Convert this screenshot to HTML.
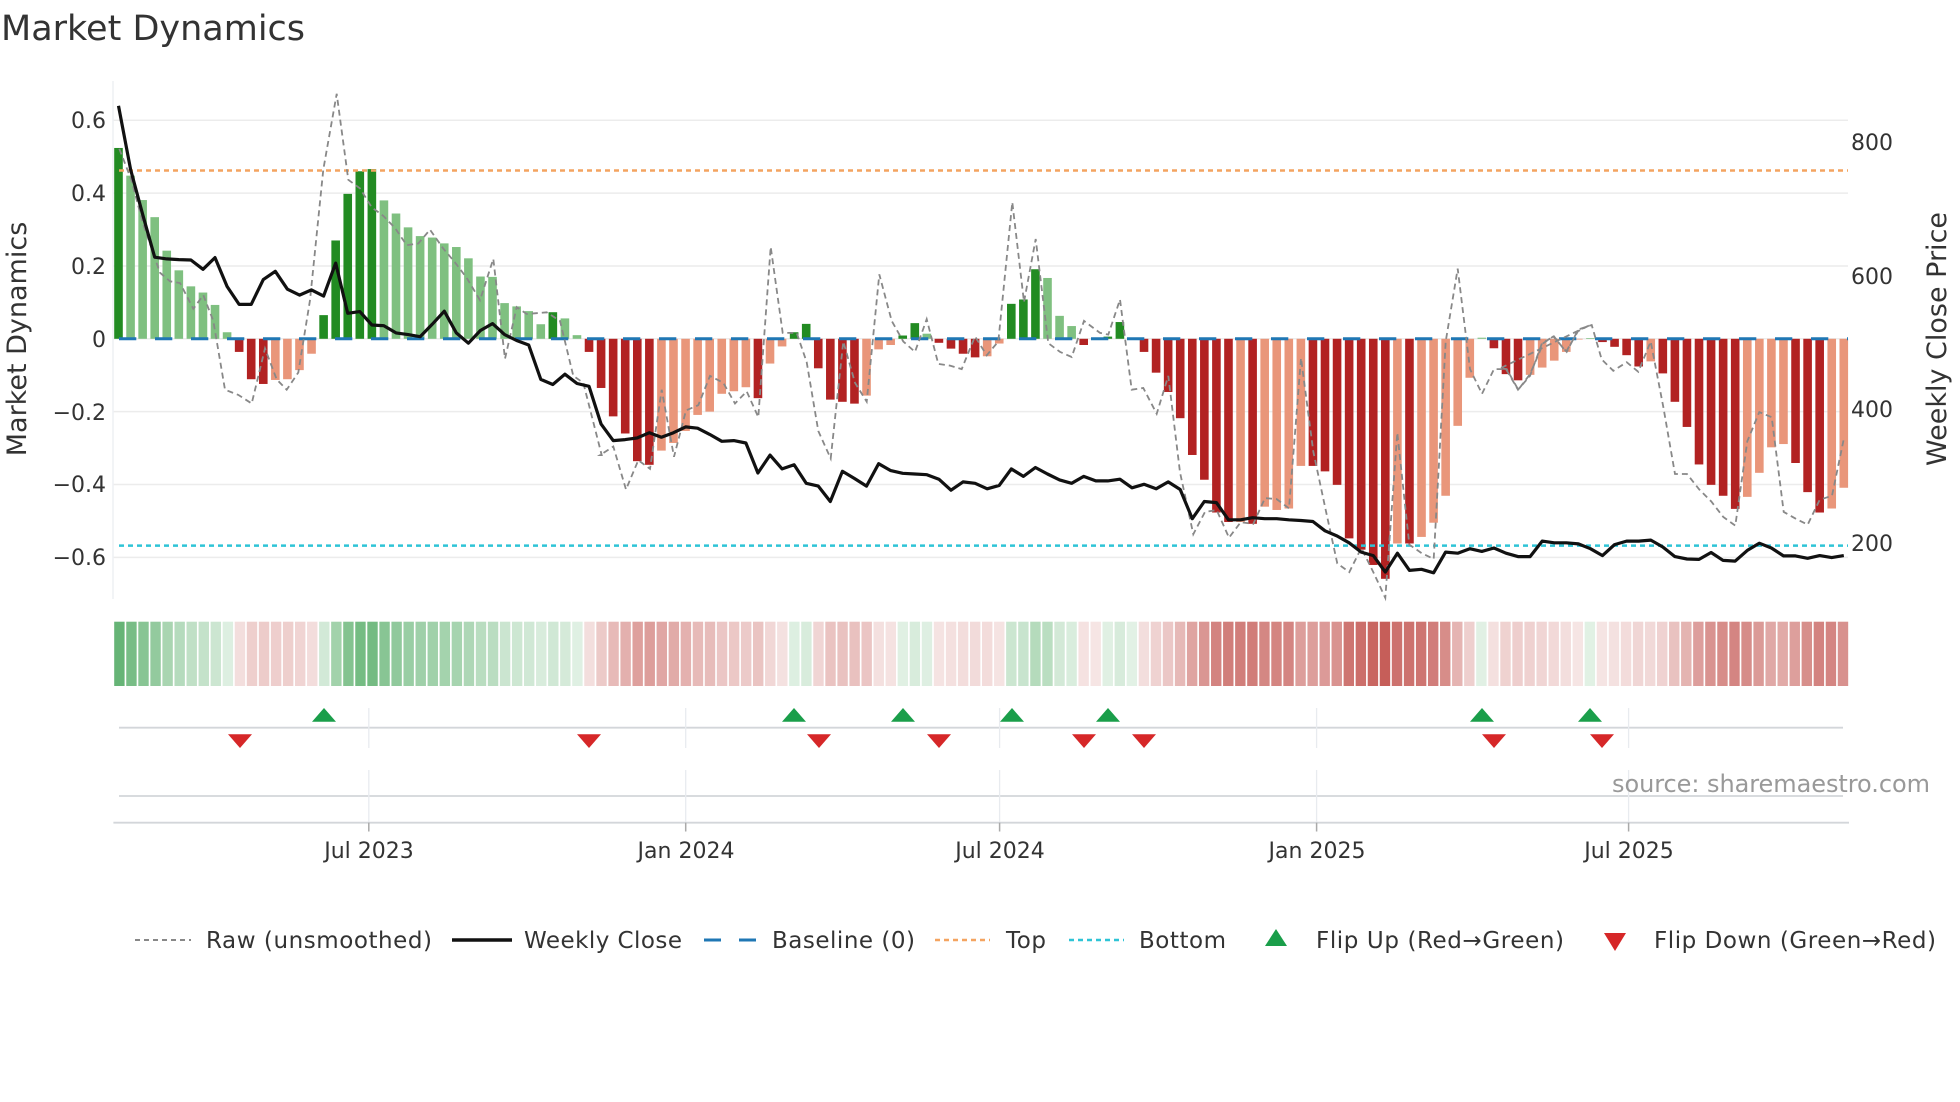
<!DOCTYPE html>
<html><head><meta charset="utf-8"><style>
html,body{margin:0;padding:0;background:#fff;}
svg{display:block;font-family:"DejaVu Sans","Liberation Sans",sans-serif;}
</style></head><body>
<svg id="c" width="1960" height="1102" viewBox="0 0 1960 1102" xmlns="http://www.w3.org/2000/svg">
<rect width="1960" height="1102" fill="#fff"/>
<text x="1" y="40" font-size="35" fill="#333">Market Dynamics</text>
<g id="grid"></g>
<g id="bars"></g>
<g id="lines"></g>
<g id="strip"></g>
<g id="low"></g>
<g font-size="22" fill="#333" text-anchor="end">
<text x="106" y="128">0.6</text>
<text x="106" y="201">0.4</text>
<text x="106" y="274">0.2</text>
<text x="106" y="347">0</text>
<text x="106" y="420">−0.2</text>
<text x="106" y="492">−0.4</text>
<text x="106" y="565">−0.6</text>
</g>
<g font-size="22" fill="#333">
<text x="1851" y="150">800</text>
<text x="1851" y="284">600</text>
<text x="1851" y="417">400</text>
<text x="1851" y="551">200</text>
</g>
<text transform="translate(26,339) rotate(-90)" font-size="27" fill="#333" text-anchor="middle">Market Dynamics</text>
<text transform="translate(1946,339) rotate(-90)" font-size="27" fill="#333" text-anchor="middle">Weekly Close Price</text>
<g font-size="22" fill="#333" text-anchor="middle">
<text x="369" y="858">Jul 2023</text>
<text x="686" y="858">Jan 2024</text>
<text x="1000" y="858">Jul 2024</text>
<text x="1317" y="858">Jan 2025</text>
<text x="1629" y="858">Jul 2025</text>
</g>
<text x="1612" y="792" font-size="24" fill="#999" textLength="318">source: sharemaestro.com</text>
<g font-size="23" fill="#333">
<line x1="135" y1="940" x2="191" y2="940" stroke="#888" stroke-width="2" stroke-dasharray="5,4"/>
<text x="206" y="948" textLength="226">Raw (unsmoothed)</text>
<line x1="452" y1="940" x2="512" y2="940" stroke="#111" stroke-width="3.5"/>
<text x="524" y="948" textLength="158">Weekly Close</text>
<line x1="704" y1="940" x2="756" y2="940" stroke="#1f77b4" stroke-width="3" stroke-dasharray="17,18"/>
<text x="772" y="948" textLength="143">Baseline (0)</text>
<line x1="935" y1="940" x2="990" y2="940" stroke="#f4a460" stroke-width="2.5" stroke-dasharray="5,4"/>
<text x="1006" y="948" textLength="40">Top</text>
<line x1="1069" y1="940" x2="1124" y2="940" stroke="#2ec4d6" stroke-width="2.5" stroke-dasharray="5,4"/>
<text x="1139" y="948" textLength="87">Bottom</text>
<polygon points="1265,946 1287,946 1276,929" fill="#1a9e4a"/>
<text x="1316" y="948" textLength="248">Flip Up (Red→Green)</text>
<polygon points="1604,933 1626,933 1615,951" fill="#d62728"/>
<text x="1654" y="948" textLength="282">Flip Down (Green→Red)</text>
</g>
</svg>
<script>
var NS="http://www.w3.org/2000/svg";
function el(p,t,a){var e=document.createElementNS(NS,t);for(var k in a)e.setAttribute(k,a[k]);document.getElementById(p).appendChild(e);return e;}
var S=118.5,P=12.065,B=338.8,K=364.2;
function X(i){return S+P*i;}
// grid
[0.6,0.4,0.2,0,-0.2,-0.4,-0.6].forEach(function(v){el("grid","line",{x1:113,x2:1848,y1:B-v*K,y2:B-v*K,stroke:"#ececec","stroke-width":1.5});});
el("grid","line",{x1:113,x2:113,y1:81,y2:599,stroke:"#eef0f3","stroke-width":1.5});
var V=[.524,.448,.381,.334,.242,.188,.144,.127,.093,.018,-.036,-.111,-.124,-.113,-.111,-.086,-.041,.065,.27,.398,.46,.466,.38,.344,.306,.282,.278,.262,.252,.221,.171,.17,.098,.089,.076,.04,.073,.056,.01,-.036,-.135,-.213,-.26,-.336,-.346,-.307,-.286,-.253,-.209,-.2,-.151,-.144,-.133,-.163,-.068,-.021,.018,.041,-.081,-.167,-.173,-.178,-.156,-.029,-.017,.009,.043,.014,-.011,-.027,-.041,-.051,-.048,-.013,.096,.108,.191,.167,.063,.035,-.017,-.003,.006,.046,.001,-.036,-.093,-.146,-.218,-.319,-.387,-.477,-.503,-.503,-.508,-.461,-.47,-.466,-.349,-.349,-.364,-.401,-.548,-.579,-.621,-.659,-.562,-.562,-.544,-.505,-.431,-.239,-.107,.003,-.026,-.097,-.114,-.099,-.079,-.06,-.036,-.002,.002,-.009,-.022,-.045,-.076,-.062,-.095,-.173,-.242,-.345,-.401,-.431,-.467,-.434,-.368,-.298,-.289,-.341,-.421,-.477,-.466,-.409];
var C="Gggggggggg"+"RRRrrrr"+"GGGGG"+"gggggggggggggg"+"Ggg"+"RR"+"RRRR"+"rrrrrrrr"+"R"+"rr"+"GG"+"RRRR"+"rrr"+"GGg"+"RRRR"+"rr"+"GGG"+"ggg"+"Rr"+"GGg"+"RRRRRRRR"+"r"+"R"+"rrrr"+"RRRRRRR"+"r"+"R"+"rrrrr"+"g"+"RRR"+"rrrrr"+"g"+"RRRR"+"r"+"RRRRRRR"+"rrrr"+"RRR"+"rr";
var COL={G:"#228b22",g:"#7fc080",R:"#b22222",r:"#e9967a"};
var last=1;
for(var i=0;i<144;i++){
 var v=V[i],y=B-v*K,c=COL[C[i]]||"#e9967a";
 el("bars","rect",{x:X(i)-4.3,width:8.6,y:Math.min(y,B),height:Math.abs(y-B),fill:c});
 // strip
 var s=v>0?1:(v<0?-1:last);last=s;
 var a=0.15+0.8*Math.min(Math.abs(v)/0.66,1);
 var base=s>0?[60,160,80]:[195,85,80];
 var rgb=base.map(function(b){return Math.round(255-(255-b)*a);});
 el("strip","rect",{x:113.4+12.053*i+0.8,width:10.4,y:621.7,height:64.3,fill:"rgb("+rgb.join(",")+")"});
}
// reference lines
el("lines","line",{x1:119,x2:1848,y1:170.5,y2:170.5,stroke:"#f4a460","stroke-width":2.5,"stroke-dasharray":"5,4"});
el("lines","line",{x1:119,x2:1848,y1:545.6,y2:545.6,stroke:"#2ec4d6","stroke-width":2.5,"stroke-dasharray":"5,4"});
el("lines","line",{x1:110,x2:1848,y1:B,y2:B,stroke:"#1f77b4","stroke-width":3,"stroke-dasharray":"17.3,18.7","stroke-dashoffset":"-9"});
// raw
var R2=[[28,200],[64,290],[100,420],[150,560],[180,585],[210,590],[250,665],[280,625],[310,700],[345,900],[385,915],[425,940],[465,780],[500,870],[530,900],[565,850],[600,640],[640,260],[680,40],[715,290],[750,315],[785,370],[820,395],[855,430],[890,480],[925,475],[960,435],[1000,490],[1035,530],[1070,575],[1110,640],[1150,520],[1185,810],[1220,660],[1250,680],[1310,675],[1350,700],[1390,860],[1420,880],[1475,1090]];
var R3=[[0,1090],[40,1065],[78,1190],[115,1105],[150,1130],[185,900],[222,1095],[258,960],[295,945],[330,860],[370,880],[405,940],[440,905],[475,980],[512,485],[548,735],[590,735],[620,820],[655,1020],[692,1100],[730,760],[765,880],[800,935],[838,565],[875,700],[910,760],[945,790],[980,695],[1015,825],[1050,830],[1085,840],[1125,745],[1160,800],[1195,760],[1237,355],[1272,645],[1307,462],[1345,765],[1380,790],[1415,805],[1452,700]];
var R4=[[0,735],[25,740],[60,638],[95,900],[130,895],[170,970],[205,860],[240,1140],[280,1320],[315,1255],[350,1250],[387,1330],[422,1285],[460,1290],[495,1215],[530,1218],[567,1245],[603,808],[640,1080],[675,1240],[712,1405],[748,1430],[784,1360],[820,1430],[856,1505],[892,1025],[928,1350],[965,1375],[1001,1392],[1037,760],[1073,548],[1110,840],[1146,912],[1182,840],[1218,840],[1254,900],[1290,860],[1326,765],[1362,745],[1398,790],[1434,730],[1470,712]];
var R5=[[0,838],[20,840],[55,900],[90,855],[130,765],[160,745],[200,790],[235,725],[275,712],[305,812],[340,845],[380,820],[415,848],[452,760],[490,950],[525,1145],[561,1145],[598,1190],[634,1225],[670,1270],[706,1295],[742,1050],[778,965],[815,980],[851,1255],[887,1275],[923,1292],[959,1220],[996,1208],[1032,1040]];
var pts=[];
[[R2,110],[R3,600],[R4,1100],[R5,1500]].forEach(function(q){q[0].forEach(function(p){pts.push((q[1]+p[0]/3).toFixed(1)+","+(80+p[1]/2.906).toFixed(1));});});
el("lines","polyline",{points:pts.join(" "),fill:"none",stroke:"#888","stroke-width":1.8,"stroke-dasharray":"6,4"});
// price
var PZ=[75,260,390,515,520,522,523,550,516,600,652,652,580,556,608,625,610,628,532,678,673,712,714,735,740,746,710,672,735,765,728,708,740,757,770,870,885,855,882,890,1000,
1048,1045,1040,1025,1038,1025,1008,1012,1030,1050,1048,1055,1142,1090,1130,1118,1172,1180,1225,1137,1158,1180,1115,1135,1143,1145,1147,1160,1192,1168,1172,1188,1178,1130,1152,1126,1145,1162,1172,1152,1165,
1165,1160,1185,1175,1188,1168,1190,1275,1225,1228,1278,1278,1272,1275,1275,1278,1280,1283,1310,1325,1345,1372,1382,1430,1375,1425,1422,1432,1372,1375,1362,1370,1360,1375,1385,1385,1340,1345,1345,1348,
1362,1382,1350,1340,1340,1337,1357,1385,1392,1393,1373,1396,1398,1367,1346,1360,1383,1383,1390,1382,1388,1382];
var pp=PZ.map(function(z,i){return X(i).toFixed(1)+","+(80+z/2.906).toFixed(1);});
el("lines","polyline",{points:pp.join(" "),fill:"none",stroke:"#111","stroke-width":3.2,"stroke-linejoin":"round"});
// lower panels
[[119,1843,727.7],[119,1843,796],[113.4,1849,822.7]].forEach(function(l){el("low","line",{x1:l[0],x2:l[1],y1:l[2],y2:l[2],stroke:"#d3d6da","stroke-width":1.8});});
[368.8,685.7,999.6,1316.6,1628.6].forEach(function(x){
 el("low","line",{x1:x,x2:x,y1:708,y2:748,stroke:"#e8ebef","stroke-width":1.3});
 el("low","line",{x1:x,x2:x,y1:770,y2:822,stroke:"#e8ebef","stroke-width":1.3});
 el("low","line",{x1:x,x2:x,y1:822.7,y2:831.5,stroke:"#aaa","stroke-width":1.5});
});
[324,794,903,1012,1108,1482,1590].forEach(function(x){el("low","polygon",{points:(x-12)+",721.7 "+(x+12)+",721.7 "+x+",708",fill:"#1a9e4a"});});
[240,589,819,939,1084,1144,1494,1602].forEach(function(x){el("low","polygon",{points:(x-12)+",734.3 "+(x+12)+",734.3 "+x+",748",fill:"#d62728"});});
</script>
</body></html>
